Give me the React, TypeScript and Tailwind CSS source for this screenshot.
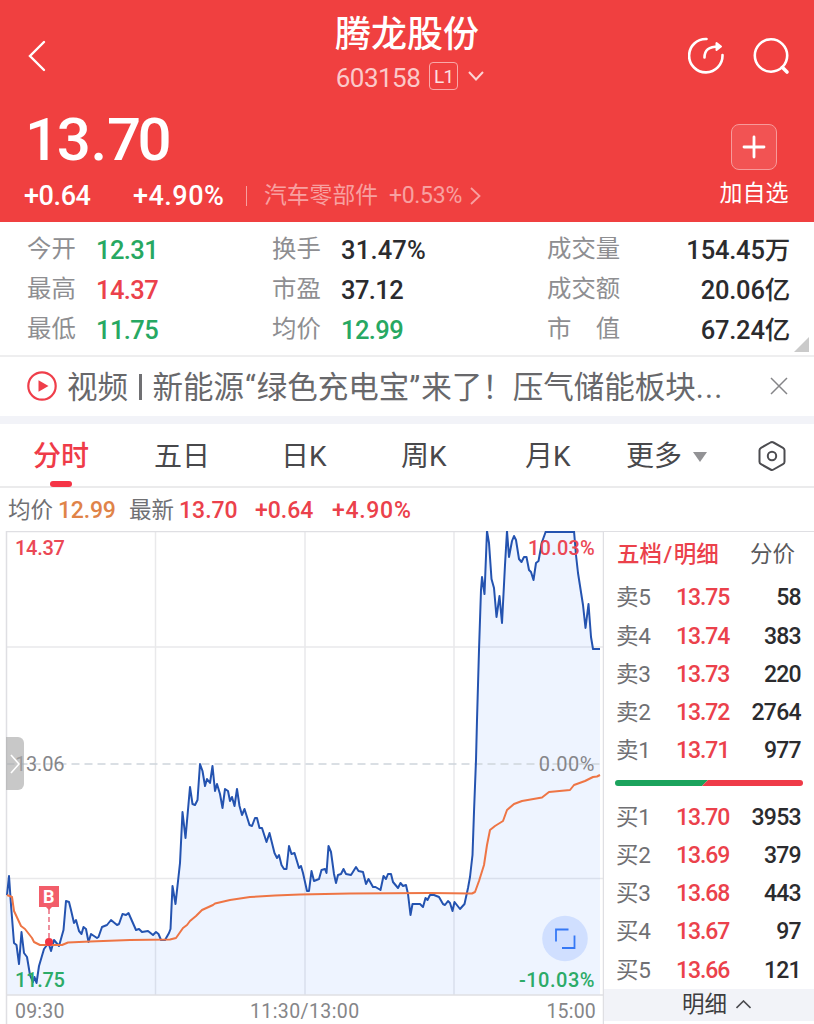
import { ReactNode } from "react";
import clsx from "clsx";

type Quote = {
  label: string;
  price: string;
  volume: string;
};

const sells: Quote[] = [
  { label: "卖5", price: "13.75", volume: "58" },
  { label: "卖4", price: "13.74", volume: "383" },
  { label: "卖3", price: "13.73", volume: "220" },
  { label: "卖2", price: "13.72", volume: "2764" },
  { label: "卖1", price: "13.71", volume: "977" }
];

const buys: Quote[] = [
  { label: "买1", price: "13.70", volume: "3953" },
  { label: "买2", price: "13.69", volume: "379" },
  { label: "买3", price: "13.68", volume: "443" },
  { label: "买4", price: "13.67", volume: "97" },
  { label: "买5", price: "13.66", volume: "121" }
];

const PRICE_LINE =
  "7,895 9,876 11,905 14,943 16.5,945 19,964 21.5,932 24,953 27,957 30,975 33,982 34.5,977 36.5,983 39,966 44,949 48.5,943 51,951 54,940 59,946 63.5,930 66,901 69,902 71,910 74,923 76,920 79,931 81.5,934 83.5,927 86,929 88.5,942 91,934 97,938 98.5,937 102,927 107,925 111,920 117,925 119,924 122.5,914 126,915 128.5,913 136,930 139,929 142,932 148,931 153,935 156,932 158.5,934 161,940 165,940 169,933 170.5,929 172.5,886 175.5,904 180,863 182.5,812 185.5,838 190,787 192.5,804 195,805 197.5,800 200,764 202.5,771 205,786 207,779 210,783 212.5,766 215,791 217,784 220,794 222.5,808 225,789 228,791 230,801 232,797 234.5,806 237,789 239.5,806 242,815 244.5,809 249.5,825 252,826 255,818 257,818 259.5,828 262,828 266.5,842 269.5,833 272,843 274.5,853 277,858 279,855 281.5,865 284,869 286.5,869 289,846 291.5,854 294.5,853 299,868 301,866 303,873 307,891 309,891 311.5,871 314,881 319,879 321.5,870 325,869 326.5,873 328.5,846 331,852 334,874 336,883 338,875 341,874 343.5,869 346,874 351,875 356,867 358.5,871 363,872 366,884 368.5,879 373,887 375.5,887 380.5,890 383.5,876 386,879 388,874 391,874 393,882 398,888 400.5,883 403,886 406,885 408,894 410.5,915 412.5,904 420,904 423,907 425.5,898 427.5,900 430,895 434,895 439,897 443,904 445,905 448,901 450,903 452.5,911 454.5,902 460,909 464.5,904 468,888 470,877 472.5,855 474,812 476,760 477,720 479,650 481,590 482,577 484.5,594 487,531 489,543 491.5,579 494,588 496.5,617 499.5,596 502,623 505,565 507,531 509,557 512,541 514,536 516,540 519,559 521.5,562 524,557 526.5,557 529,570 531,572 533.5,580 536,563 538.5,561 542,542 546,531 574,531 576,555 578,573 583,605 585.5,628 588.5,604 591,637 593,649 600,649";

const AVERAGE_LINE =
  "7,895 12,897 14,911 21,926 25,929 32,938 34,942 40,945 62,945 68,942.5 90,941.5 130,940 170,939.5 176,938 183,928 187,925 190,921 196,916 202,910 213,905 215,903.5 230,900 250,897 275,895.5 300,894.5 350,893.5 430,893 472,893.5 475,892 479,881 484,865 487,845 490,830 495,826 503,821 507,810 514,804 522,801 542,797.5 549,792 570,790 574,785 585,781 593,777 597,776.5 600,775";

function Header() {
  return (
    <header className="h-[222px] bg-[#f04040] text-white">
      <div className="flex h-[104px] justify-between">
        <div className="w-[126px] pl-7 pt-10">
          <svg width="18" height="32" viewBox="0 0 18 32" fill="none" stroke="currentColor" strokeWidth="2.4" strokeLinecap="round">
            <path d="M16 2 2 16l14 14" />
          </svg>
        </div>
        <div className="flex w-[200px] flex-col items-center pt-[14px]">
          <h1 className="text-[36px] font-medium leading-[42px]">腾龙股份</h1>
          <div className="mt-[6px] flex h-7 items-center pl-[6px]">
            <span className="pt-[3px] text-[26px] leading-7 tracking-[-0.5px] text-[#fbc9c9]">603158</span>
            <span className="ml-[9px] flex h-7 w-[29px] items-center justify-center rounded border border-[#f9a9a9] text-[19px] leading-none tracking-[-0.5px] text-[#fde0e0]">
              L1
            </span>
            <svg className="ml-[10px]" width="16" height="10" viewBox="0 0 16 10" fill="none" stroke="#fcd4d4" strokeWidth="2">
              <path d="m1 1 7 7.500 7-7.500" />
            </svg>
          </div>
        </div>
        <div className="flex w-[126px] gap-[27px] pt-[37px]">
          <svg width="38" height="38" viewBox="0 0 38 38" fill="none" stroke="currentColor" strokeWidth="2.6" strokeLinecap="round" strokeLinejoin="round">
            <path d="M18.500 2A16.700 16.700 0 1 0 34.500 18" />
            <path d="M16.500 20.500c0-7 4-11 14-11" />
            <path d="M28.500 6v7l4.500-3.500z" fill="currentColor" strokeWidth="2" />
          </svg>
          <svg width="38" height="38" viewBox="0 0 38 38" fill="none" stroke="currentColor" strokeWidth="2.600" strokeLinecap="round">
            <circle cx="18" cy="18.500" r="16.200" />
            <path d="m29.500 30.500 4.500 4.500" strokeWidth="3.600" />
          </svg>
        </div>
      </div>
      <div className="flex justify-between">
        <div className="pl-6">
          <div className="h-[70px] pl-px pt-px text-[60px] font-medium leading-[70px] tracking-[-2.300px]">
            13<span className="mx-[2px]">.</span>
            <span className="tracking-[-3.500px]">70</span>
          </div>
          <div className="flex h-[42px] items-center pt-[2px]">
            <span className="w-[109px] text-[27px] font-medium tracking-[-0.400px]">+0.64</span>
            <span className="w-[113px] text-[27px] font-medium tracking-[0.500px]">+4.90%</span>
            <span className="h-5 w-px bg-[#f79f9f]" />
            <span className="ml-[17px] text-[22.800px] text-[#f8a0a0]">汽车零部件</span>
            <span className="ml-[11px] text-[23px] tracking-[-0.300px] text-[#f8a0a0]">+0.53%</span>
            <svg className="ml-2" width="11" height="18" viewBox="0 0 11 18" fill="none" stroke="#f8a0a0" strokeWidth="1.800">
              <path d="m1 1 8.500 8L1 17" />
            </svg>
          </div>
        </div>
        <div className="flex w-[120px] flex-col items-center pt-5">
          <span className="flex h-[46px] w-[46px] items-center justify-center rounded-lg border border-[#f79a9a] bg-[#f25353]">
            <svg width="24" height="24" viewBox="0 0 24 24" stroke="currentColor" strokeWidth="2.800" strokeLinecap="round">
              <path d="M2 12h20M12 2v20" />
            </svg>
          </span>
          <span className="mt-[9px] text-[23px] leading-[30px]">加自选</span>
        </div>
      </div>
    </header>
  );
}

function Stat({ label, tone = "text-[#2b2b2e]", end, children }: { label: string; tone?: string; end?: boolean; children: ReactNode }) {
  return (
    <div className={clsx("flex h-10 items-center", end && "justify-between")}>
      <span className={clsx("whitespace-pre text-[24.400px] leading-10 text-[#8e8e91]", end ? "w-[90px]" : "w-[69px]")}>{label}</span>
      <span className={clsx("pt-[3px] text-[25.500px] font-medium leading-[37px]", tone, end ? "tracking-[-0.200px]" : "tracking-[-0.600px]")}>
        {children}
      </span>
    </div>
  );
}

function Stats() {
  return (
    <section className="relative flex h-[135px] border-b-2 border-[#eeeeef] pt-[7px]">
      <div className="w-[272px] pl-[27px]">
        <Stat label="今开" tone="text-[#27a862]">12.31</Stat>
        <Stat label="最高" tone="text-[#eb414b]">14.37</Stat>
        <Stat label="最低" tone="text-[#27a862]">11.75</Stat>
      </div>
      <div className="w-[275px]">
        <Stat label="换手">
          <span className="tracking-[0.200px]">31.47%</span>
        </Stat>
        <Stat label="市盈">37.12</Stat>
        <Stat label="均价" tone="text-[#27a862]">12.99</Stat>
      </div>
      <div className="w-[243px]">
        <Stat label="成交量" end>154.45万</Stat>
        <Stat label="成交额" end>20.06亿</Stat>
        <Stat label="市　值" end>67.24亿</Stat>
      </div>
      <svg className="absolute bottom-[3px] right-[5px]" width="15" height="15" viewBox="0 0 15 15">
        <path d="M15 0v15H0z" fill="#cacaca" />
      </svg>
    </section>
  );
}

function News() {
  return (
    <section className="flex h-[59px] items-center pb-[2px] pl-[27px] text-[#68686b]">
      <svg width="30" height="30" viewBox="0 0 30 30" fill="none">
        <circle cx="15" cy="15" r="13.700" stroke="#ef3e4a" strokeWidth="2.200" />
        <path d="M11.500 9.300v11.400l10-5.700z" fill="#ef3e4a" />
      </svg>
      <p className="ml-[10px] w-[690px] whitespace-nowrap pt-[4px] text-[30.500px] leading-[53px]">
        视频<span className="mx-[11px] inline-block h-[26px] w-[2.500px] bg-[#707073] align-[-2px]" />新能源
        <span className="ml-px mr-px">“</span>绿色充电宝<span className="mr-px">”</span>来了！压气储能板块
        <span className="tracking-[1.200px]">...</span>
      </p>
      <svg className="ml-[13px]" width="18" height="18" viewBox="0 0 18 18" stroke="#858588" strokeWidth="1.500">
        <path d="m1 1 16 16M17 1 1 17" />
      </svg>
    </section>
  );
}

function Tabs() {
  return (
    <nav className="flex h-[72px] items-center border-t-8 border-[#f2f3f8] pt-[2px] text-[28px] text-[#48484b] shadow-[inset_0_-2px_0_#ebebec]">
      <div className="relative w-[122px] pl-[33px] font-medium text-[#ef3b48]">
        分时
        <span className="absolute -bottom-[9px] left-[50px] h-[6px] w-[22px] rounded-full bg-[#f53446]" />
      </div>
      <div className="w-[122px] pl-[32px]">五日</div>
      <div className="w-[122px] pl-[37px]">日K</div>
      <div className="w-[122px] pl-[35px]">周K</div>
      <div className="w-[122px] pl-[37px]">月K</div>
      <div className="flex w-[147px] items-center pl-[16px]">
        更多
        <svg className="ml-[11px]" width="14" height="10" viewBox="0 0 14 10">
          <path d="M0 0h14L7 10z" fill="#929295" />
        </svg>
      </div>
      <svg className="-mt-[3px]" width="30" height="32" viewBox="0 0 30 32" fill="none" stroke="#4c4c50" strokeWidth="2" strokeLinejoin="round">
        <path d="M13.500 2.500q1.500-.8 3 0l9.500 5.300q1.500.8 1.500 2.500v11.400q0 1.700-1.500 2.500l-9.500 5.300q-1.500.8-3 0L4 24.200q-1.500-.8-1.500-2.500V10.300q0-1.700 1.500-2.500z" />
        <circle cx="15" cy="16" r="4.200" />
      </svg>
    </nav>
  );
}

function Chart() {
  return (
    <div className="relative w-[604px] text-[20px]">
      <svg className="block" width="604" height="493" viewBox="0 531 604 493" fill="none">
        <g stroke="#e9e9eb" strokeWidth="1.500">
          <path d="M155.500 531v464M305 531v464M454 531v464M6.500 647H603M6.500 878.500H603" />
        </g>
        <polygon points={`7,995 ${PRICE_LINE} 600,995`} fill="#3f7bff" fillOpacity="0.085" />
        <path d="M6.500 764H603" stroke="#ced5dc" strokeWidth="1.300" strokeDasharray="8 5" />
        <path d="M6.500 1024V531.500H604M603.500 531v493M6.500 995H603" stroke="#dfdfe3" strokeWidth="1.500" />
        <polyline points={PRICE_LINE} stroke="#2453b0" strokeWidth="2" strokeLinejoin="round" />
        <path d="M546 532h28" stroke="#2453b0" strokeWidth="2" />
        <polyline points={AVERAGE_LINE} stroke="#ee7545" strokeWidth="2" strokeLinejoin="round" />
        <path d="M49 909v30" stroke="#e5566a" strokeWidth="1.300" strokeDasharray="5 3" />
        <circle cx="49" cy="942" r="4" fill="#f23645" />
        <path d="M39 886h20v21h-7l-3 3-3-3h-7z" fill="#f25d6a" />
        <circle cx="565" cy="938.500" r="22.800" fill="#d0dfff" />
        <path d="M556 941.500V929.500h12.500M574.500 935.500v12.500H562" stroke="#3679f5" strokeWidth="1.800" />
      </svg>
      <span className="absolute left-[43px] top-[355px] text-[18px] font-bold leading-[22px] text-white">B</span>
      <span className="absolute left-[15px] top-[5px] font-medium leading-6 tracking-[-0.300px] text-[#eb4855]">14.37</span>
      <span className="absolute right-[9px] top-[5px] font-medium leading-6 tracking-[0.200px] text-[#eb4855]">10.03%</span>
      <span className="absolute left-[15px] top-[221px] leading-6 tracking-[-0.200px] text-[#86868a]">13.06</span>
      <span className="absolute right-[9px] top-[221px] leading-6 tracking-[0.500px] text-[#86868a]">0.00%</span>
      <span className="absolute left-[15px] top-[437px] font-medium leading-6 tracking-[-0.300px] text-[#2cab68]">11.75</span>
      <span className="absolute right-[9px] top-[437px] font-medium leading-6 tracking-[0.500px] text-[#2cab68]">-10.03%</span>
      <span className="absolute left-[15px] top-[471px] text-[19.500px] leading-5 tracking-[0.200px] text-[#858588]">09:30</span>
      <span className="absolute left-[250px] top-[471px] text-[19.500px] leading-5 tracking-[0.400px] text-[#858588]">11:30/13:00</span>
      <span className="absolute right-[8px] top-[471px] text-[19.500px] leading-5 tracking-[0.200px] text-[#858588]">15:00</span>
      <span className="absolute left-[6px] top-[206px] flex h-[53px] w-[18px] items-center rounded-r-md bg-[#aaaaaa]/65 pl-1">
        <svg width="10" height="20" viewBox="0 0 10 20" fill="none" stroke="white" strokeWidth="1.600">
          <path d="m1 1 8 9-8 9" />
        </svg>
      </span>
    </div>
  );
}

function QuoteRow({ label, price, volume }: Quote) {
  return (
    <div className="flex h-[38.250px] items-center text-[23px] font-medium">
      <span className="w-[60px] text-[22.500px] font-normal tracking-[-0.300px] text-[#707073]">{label}</span>
      <span className="pt-px tracking-[-1.100px] text-[#eb414b]">{price}</span>
      <span className="ml-auto pt-px tracking-[-0.700px] text-[#2b2b2e]">{volume}</span>
    </div>
  );
}

function OrderBook() {
  return (
    <aside className="flex w-[210px] flex-col border-t border-[#dfdfe3]">
      <div className="flex h-[47px] items-center justify-between pb-[2px] pl-[13px] pr-[19px] text-[22.500px]">
        <span className="font-medium text-[#eb414b]">
          五档<span className="mx-[1.500px]">/</span>明细
        </span>
        <span className="text-[#59595c]">分价</span>
      </div>
      <div className="pl-[12px] pr-[13px]">
        {sells.map((q) => (
          <QuoteRow key={q.label} {...q} />
        ))}
      </div>
      <svg className="ml-[11px] mt-[10px]" width="188" height="6" viewBox="0 0 188 6">
        <path d="M3 0h90l-6 6H3a3 3 0 0 1 0-6z" fill="#1ba35d" />
        <path d="M93 0h92a3 3 0 0 1 0 6H87z" fill="#ef3b48" />
      </svg>
      <div className="mt-[12px] pl-[12px] pr-[13px]">
        {buys.map((q) => (
          <QuoteRow key={q.label} {...q} />
        ))}
      </div>
      <div className="-mt-px flex h-8 items-center bg-[#f2f3f8] pl-[78px] text-[22.500px] text-[#3d3d40]">
        明细
        <svg className="ml-[9px]" width="15" height="9" viewBox="0 0 15 9" fill="none" stroke="#4c4c50" strokeWidth="1.600">
          <path d="m.5 8 7-7 7 7" />
        </svg>
      </div>
    </aside>
  );
}

export default function App() {
  return (
    <main className="h-[1024px] w-[814px] overflow-hidden bg-white font-['Roboto','Noto_Sans_CJK_SC',sans-serif]">
      <Header />
      <Stats />
      <News />
      <Tabs />
      <div className="flex h-[43px] items-center pl-2 pt-[3px] text-[23px] font-medium text-[#eb414b]">
        <span className="w-[50px] text-[22.500px] font-normal text-[#707073]">均价</span>
        <span className="w-[71px] tracking-[-0.200px] text-[#e08348]">12.99</span>
        <span className="w-[50px] text-[22.500px] font-normal text-[#707073]">最新</span>
        <span className="w-[76px]">13.70</span>
        <span className="w-[77px]">+0.64</span>
        <span className="tracking-[0.700px]">+4.90%</span>
      </div>
      <div className="flex h-[493px]">
        <Chart />
        <OrderBook />
      </div>
    </main>
  );
}
